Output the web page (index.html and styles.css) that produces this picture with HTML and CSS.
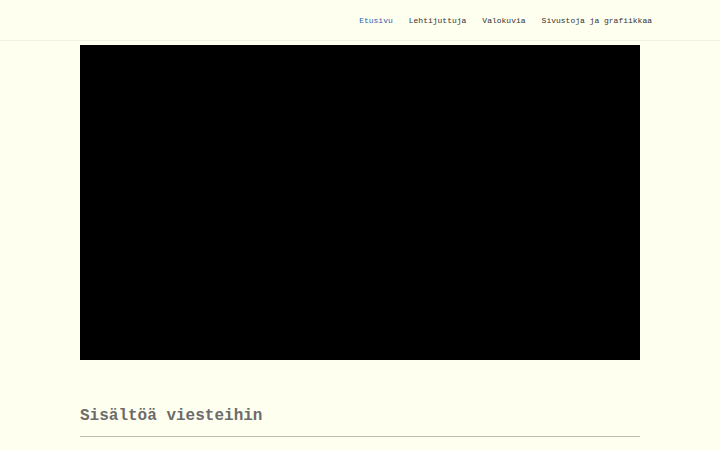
FILE: index.html
```html
<!DOCTYPE html>
<html lang="fi">
<head>
    <meta charset="UTF-8">
    <title>Etusivu</title>
    <link rel="stylesheet" href="styles.css">
</head>
<body>
    <header class="site-header">
        <nav class="main-nav">
            <a href="#" class="active">Etusivu</a>
            <a href="#">Lehtijuttuja</a>
            <a href="#">Valokuvia</a>
            <a href="#">Sivustoja ja grafiikkaa</a>
        </nav>
    </header>

    <main class="content">
        <div class="video"></div>
        <h2 class="section-title">Sisältöä viesteihin</h2>
        <hr class="divider">
    </main>
</body>
</html>
```

FILE: styles.css
```css
body {
    margin: 0;
    background: #fffff0;
    font-family: "Liberation Mono", "Courier New", monospace;
    color: #333;
}
.site-header {
    height: 40px;
    border-bottom: 1px solid #efefe4;
}
.main-nav {
    max-width: 584px;
    height: 40px;
    margin: 0 auto;
    display: flex;
    justify-content: flex-end;
    align-items: center;
    gap: 16px;
}
.main-nav a {
    font-size: 8px;
    color: #333;
    text-decoration: none;
}
.main-nav a.active {
    color: #2a5db0;
}
.content {
    max-width: 560px;
    margin: 4px auto 0;
}
.video {
    height: 315px;
    background: #000;
}
.section-title {
    margin: 47px 0 11px;
    font-size: 16px;
    line-height: 18px;
    color: #6b6b6b;
}
.divider {
    margin: 0;
    border: 0;
    border-top: 1px solid #bdbdb5;
}
```
